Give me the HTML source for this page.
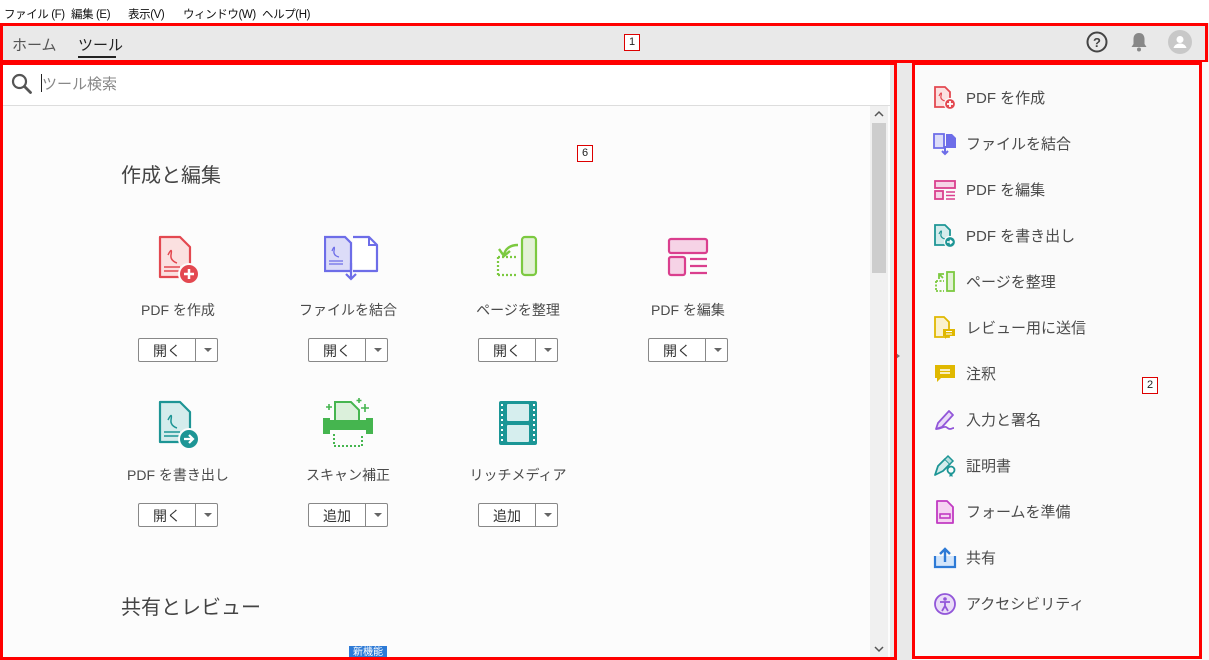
<!DOCTYPE html>
<html><head><meta charset="utf-8"><style>
*{margin:0;padding:0;box-sizing:border-box}
body{width:1209px;height:660px;overflow:hidden;background:#fff;font-family:"Liberation Sans","Noto Sans CJK JP",sans-serif;position:relative;color:#4b4b4b}
.a{position:absolute}
.menu span{position:absolute;top:6px;font-size:11.5px;color:#111;white-space:nowrap;letter-spacing:-0.4px}
.red{position:absolute;border:3px solid #f00}
.lbl{position:absolute;border:1px solid #d00;background:#fff;font-size:11px;color:#222;width:16px;height:17px;text-align:center;line-height:15px}
.tool{position:absolute;width:170px;text-align:center}
.tool .nm{position:absolute;left:0;width:170px;top:65px;font-size:14px;color:#4b4b4b}
.btn{position:absolute;left:45px;top:103px;width:80px;height:24px;border:1px solid #888;border-radius:2px;background:#fff;font-size:14px;color:#333}
.btn .t{position:absolute;left:0;width:56px;top:2px;text-align:center}
.btn .d{position:absolute;left:56px;top:0;width:23px;height:22px;border-left:1px solid #888}
.btn .d:after{content:"";position:absolute;left:8px;top:9px;border:4px solid transparent;border-top:4px solid #666}
.icon{position:absolute;left:61px;top:0}
.side{position:absolute;left:933px;font-size:15px;color:#4b4b4b}
.side svg{position:absolute;left:0;top:-11px}
.side span{position:absolute;left:33px;top:-10px;white-space:nowrap}
</style></head><body>
<div class="menu">
<span style="left:4px">ファイル (F)</span><span style="left:71px">編集 (E)</span><span style="left:128px">表示(V)</span><span style="left:183px">ウィンドウ(W)</span><span style="left:262px">ヘルプ(H)</span>
</div>
<div class="a" style="left:0;top:23px;width:1209px;height:39px;background:#e9e9e9"></div>
<div class="a" style="left:12px;top:34px;font-size:15px;color:#555">ホーム</div>
<div class="a" style="left:78px;top:34px;font-size:15px;color:#222">ツール</div>
<div class="a" style="left:78px;top:56px;width:38px;height:2px;background:#222"></div>
<svg class="a" style="left:1086px;top:31px" width="22" height="22" viewBox="0 0 22 22"><circle cx="11" cy="11" r="9.5" fill="none" stroke="#444" stroke-width="2"/><text x="11" y="16" font-size="13" font-weight="bold" text-anchor="middle" fill="#444" font-family="Liberation Sans">?</text></svg>
<svg class="a" style="left:1129px;top:31px" width="20" height="22" viewBox="0 0 20 22"><path d="M10 2c-4 0-5.5 3-5.5 6v5L2.5 16h15l-2-3V8c0-3-1.5-6-5.5-6z" fill="#888"/><circle cx="10" cy="18.5" r="2" fill="#888"/></svg>
<svg class="a" style="left:1168px;top:30px" width="24" height="24" viewBox="0 0 24 24"><circle cx="12" cy="12" r="12" fill="#c8c8c8"/><circle cx="12" cy="9.5" r="3.5" fill="#fff"/><path d="M5.5 18c1-3.5 4-4.5 6.5-4.5s5.5 1 6.5 4.5z" fill="#fff"/></svg>
<div class="red" style="left:0;top:23px;width:1208px;height:40px"></div>
<div class="lbl" style="left:624px;top:34px">1</div>

<div class="a" style="left:0;top:63px;width:890px;height:597px;background:#fcfcfc"></div>
<div class="a" style="left:0;top:63px;width:890px;height:43px;background:#fff;border-bottom:1px solid #ddd"></div>
<svg class="a" style="left:11px;top:73px" width="22" height="22" viewBox="0 0 22 22"><circle cx="8.5" cy="8.5" r="6.5" fill="none" stroke="#555" stroke-width="2.2"/><path d="M13.5 13.5l6 6" stroke="#555" stroke-width="2.8" stroke-linecap="round"/></svg>
<div class="a" style="left:41px;top:74px;width:1px;height:18px;background:#222"></div>
<div class="a" style="left:42px;top:73px;font-size:15px;color:#888">ツール検索</div>
<div class="a" style="left:870px;top:106px;width:18px;height:552px;background:#f0f0f0"></div>
<div class="a" style="left:872px;top:123px;width:14px;height:150px;background:#cdcdcd"></div>
<svg class="a" style="left:874px;top:110px" width="10" height="8"><path d="M1 6l4-4 4 4" fill="none" stroke="#555" stroke-width="1.5"/></svg>
<svg class="a" style="left:874px;top:645px" width="10" height="8"><path d="M1 2l4 4 4-4" fill="none" stroke="#555" stroke-width="1.5"/></svg>
<div class="a" style="left:890px;top:63px;width:22px;height:597px;background:#e9e9e9"></div>
<div class="a" style="left:896px;top:353px;border:3px solid transparent;border-left:4px solid #777"></div>

<div class="a" style="left:121px;top:159px;font-size:20px;color:#444">作成と編集</div>

<div class="tool" style="left:93px;top:235px">
<svg class="icon" width="50" height="52" viewBox="0 0 50 52"><path d="M6 2h20l10 10v30H6z" fill="#fbe0e0" stroke="#e34850" stroke-width="2.2" stroke-linejoin="round"/><path d="M14 20c3-6 4-6 3 0s6 8 6 8" fill="none" stroke="#e34850" stroke-width="1.5"/><path d="M10 32h16M10 36h16" stroke="#e34850" stroke-width="1.5"/><circle cx="35" cy="39" r="10" fill="#e34850" stroke="#fcfcfc" stroke-width="2"/><path d="M35 34v10M30 39h10" stroke="#fff" stroke-width="2.5"/></svg>
<div class="nm">PDF を作成</div><div class="btn"><span class="t">開く</span><span class="d"></span></div></div>

<div class="tool" style="left:263px;top:235px">
<svg class="icon" width="56" height="52" viewBox="0 0 56 52"><path d="M1 2h20l6 6v28H1z" fill="#dcdcf8" stroke="#6d6de8" stroke-width="2.2"/><path d="M8 16c2-5 3-5 2 0s5 6 5 6" fill="none" stroke="#6d6de8" stroke-width="1.3"/><path d="M5 26h14M5 29h14" stroke="#6d6de8" stroke-width="1.3"/><path d="M29 2h16l8 8v26H29" fill="#fff" stroke="#6d6de8" stroke-width="2.2" stroke-linejoin="round"/><path d="M45 2v8h8" fill="none" stroke="#6d6de8" stroke-width="2"/><path d="M27 28v16M22 39l5 5 5-5" fill="none" stroke="#6d6de8" stroke-width="2.2"/></svg>
<div class="nm">ファイルを結合</div><div class="btn"><span class="t">開く</span><span class="d"></span></div></div>

<div class="tool" style="left:433px;top:235px">
<svg class="icon" width="50" height="48" viewBox="0 0 50 48"><rect x="28" y="2" width="14" height="38" rx="3" fill="#e3f1d6" stroke="#7cc940" stroke-width="2.2"/><path d="M4 22h20M4 40h20M4 22v18" stroke="#7cc940" stroke-width="2.2" stroke-dasharray="2 2"/><path d="M24 10c-8 0-13 4-14 10" fill="none" stroke="#7cc940" stroke-width="2.4"/><path d="M5 14l5 7 6-5" fill="none" stroke="#7cc940" stroke-width="2.4"/></svg>
<div class="nm">ページを整理</div><div class="btn"><span class="t">開く</span><span class="d"></span></div></div>

<div class="tool" style="left:603px;top:235px">
<svg class="icon" width="50" height="48" viewBox="0 0 50 48"><rect x="5" y="4" width="38" height="14" rx="2" fill="#f6d3e6" stroke="#da3f8e" stroke-width="2.2"/><rect x="5" y="22" width="16" height="18" rx="2" fill="#f6d3e6" stroke="#da3f8e" stroke-width="2.2"/><path d="M26 24h17M26 31h17M26 38h17" stroke="#da3f8e" stroke-width="2.2"/></svg>
<div class="nm">PDF を編集</div><div class="btn"><span class="t">開く</span><span class="d"></span></div></div>

<div class="tool" style="left:93px;top:400px">
<svg class="icon" width="50" height="52" viewBox="0 0 50 52"><path d="M6 2h20l10 10v30H6z" fill="#d4ecec" stroke="#1d9595" stroke-width="2.2" stroke-linejoin="round"/><path d="M14 20c3-6 4-6 3 0s6 8 6 8" fill="none" stroke="#1d9595" stroke-width="1.5"/><path d="M10 32h16M10 36h16" stroke="#1d9595" stroke-width="1.5"/><circle cx="35" cy="39" r="10" fill="#1d9595" stroke="#fcfcfc" stroke-width="2"/><path d="M30 39h9M35 35l4 4-4 4" fill="none" stroke="#fff" stroke-width="2.2"/></svg>
<div class="nm">PDF を書き出し</div><div class="btn"><span class="t">開く</span><span class="d"></span></div></div>

<div class="tool" style="left:263px;top:400px">
<svg class="icon" style="left:58px;top:-4px" width="54" height="54" viewBox="0 0 54 54"><path d="M14 6h16l8 8v14H14z" fill="#dbf0db" stroke="#45b54f" stroke-width="2"/><path d="M4 24h46v10H4z" fill="#45b54f"/><path d="M2 22h7v16H2zM45 22h7v16h-7z" fill="#45b54f"/><path d="M13 38v12h28V38" fill="none" stroke="#45b54f" stroke-width="2" stroke-dasharray="2 2"/><path d="M8 8v6M5 11h6M44 8v8M40 12h8M38 2v5M35.5 4.5h5" stroke="#45b54f" stroke-width="1.6"/></svg>
<div class="nm">スキャン補正</div><div class="btn"><span class="t">追加</span><span class="d"></span></div></div>

<div class="tool" style="left:433px;top:400px">
<svg class="icon" style="left:65px" width="40" height="46" viewBox="0 0 40 46"><rect x="1" y="1" width="38" height="44" rx="2" fill="#1b9696"/><rect x="9" y="4" width="22" height="17" rx="1" fill="#d6eeee"/><rect x="9" y="25" width="22" height="17" rx="1" fill="#d6eeee"/><path d="M4 4v38M36 4v38" stroke="#fff" stroke-width="2" stroke-dasharray="2 3"/></svg>
<div class="nm">リッチメディア</div><div class="btn"><span class="t">追加</span><span class="d"></span></div></div>

<div class="a" style="left:121px;top:591px;font-size:20px;color:#444">共有とレビュー</div>
<div class="a" style="left:349px;top:646px;width:38px;height:14px;background:#2d7ad6;color:#fff;font-size:10px;text-align:center;line-height:14px">新機能</div>

<div class="red" style="left:0;top:62px;width:897px;height:598px"></div>
<div class="lbl" style="left:577px;top:145px">6</div>

<div class="a" style="left:912px;top:62px;width:297px;height:598px;background:#fafafa"></div>
<div class="side" style="top:97px"><svg width="24" height="24" viewBox="0 0 24 24"><path d="M2 1h10l5 5v15H2z" fill="#fbe0e0" stroke="#e34850" stroke-width="1.8"/><path d="M6 10c2-4 3-4 2 0s4 5 4 5" fill="none" stroke="#e34850" stroke-width="1.2"/><circle cx="17" cy="18" r="5.5" fill="#e34850" stroke="#fafafa" stroke-width="1.2"/><path d="M17 15v6M14 18h6" stroke="#fff" stroke-width="1.8"/></svg><span>PDF を作成</span></div>
<div class="side" style="top:143px"><svg width="24" height="24" viewBox="0 0 24 24"><path d="M1 2h10v14H1z" fill="#dcdcf8" stroke="#6d6de8" stroke-width="1.8"/><path d="M13 2h6l4 4v10H13z" fill="#6d6de8"/><path d="M12 14v8M9 19l3 3 3-3" fill="none" stroke="#6d6de8" stroke-width="2"/></svg><span>ファイルを結合</span></div>
<div class="side" style="top:189px"><svg width="24" height="24" viewBox="0 0 24 24"><rect x="2" y="3" width="20" height="7" fill="#f6d3e6" stroke="#da3f8e" stroke-width="1.8"/><rect x="2" y="13" width="8" height="8" fill="#f6d3e6" stroke="#da3f8e" stroke-width="1.8"/><path d="M13 14h9M13 17.5h9M13 21h9" stroke="#da3f8e" stroke-width="1.5"/></svg><span>PDF を編集</span></div>
<div class="side" style="top:235px"><svg width="24" height="24" viewBox="0 0 24 24"><path d="M2 1h10l5 5v15H2z" fill="#d4ecec" stroke="#1d9595" stroke-width="1.8"/><path d="M6 10c2-4 3-4 2 0s4 5 4 5" fill="none" stroke="#1d9595" stroke-width="1.2"/><circle cx="17" cy="18" r="5.5" fill="#1d9595" stroke="#fafafa" stroke-width="1.2"/><path d="M14 18h5M17 16l2 2-2 2" fill="none" stroke="#fff" stroke-width="1.5"/></svg><span>PDF を書き出し</span></div>
<div class="side" style="top:281px"><svg width="24" height="24" viewBox="0 0 24 24"><rect x="14" y="2" width="7" height="19" fill="#e3f1d6" stroke="#7cc940" stroke-width="1.8"/><path d="M3 11h8M3 21h8M3 11v10" stroke="#7cc940" stroke-width="1.8" stroke-dasharray="2 1.5"/><path d="M11 4H6v5M6 4l4 4" fill="none" stroke="#7cc940" stroke-width="1.8"/></svg><span>ページを整理</span></div>
<div class="side" style="top:327px"><svg width="24" height="24" viewBox="0 0 24 24"><path d="M2 1h9l5 5v15H2z" fill="#fbf1cc" stroke="#e0b800" stroke-width="1.8"/><path d="M10 13h12v7h-7l-3 3v-3h-2z" fill="#e0b800"/><path d="M13 15.5h6M13 18h6" stroke="#fff" stroke-width="1"/></svg><span>レビュー用に送信</span></div>
<div class="side" style="top:373px"><svg width="24" height="24" viewBox="0 0 24 24"><path d="M2 3h20v13H8l-4 4v-4H2z" fill="#e0b800"/><path d="M7 8h10M7 11h10" stroke="#fff" stroke-width="1.6"/></svg><span>注釈</span></div>
<div class="side" style="top:419px"><svg width="24" height="24" viewBox="0 0 24 24"><path d="M3 21l2-6L16 3l4 4L9 19z" fill="#eadcf8" stroke="#9256d9" stroke-width="1.8" stroke-linejoin="round"/><path d="M3 21c5 0 8-3 10-2s2 2 4 2 2-1 4-1" fill="none" stroke="#9256d9" stroke-width="1.8"/></svg><span>入力と署名</span></div>
<div class="side" style="top:465px"><svg width="24" height="24" viewBox="0 0 24 24"><path d="M2 21l3-9 7-7 5 5-7 7z" fill="#d4ecec" stroke="#1d9595" stroke-width="1.8" stroke-linejoin="round"/><path d="M12 5l3-3 5 5-3 3" fill="#b7dede" stroke="#1d9595" stroke-width="1.5"/><circle cx="18" cy="16" r="3.5" fill="none" stroke="#1d9595" stroke-width="1.8"/><path d="M16.5 19v4l1.5-1 1.5 1v-4" fill="#1d9595"/></svg><span>証明書</span></div>
<div class="side" style="top:511px"><svg width="24" height="24" viewBox="0 0 24 24"><path d="M4 1h10l6 6v16H4z" fill="#f6d3f2" stroke="#c13ac2" stroke-width="1.8" stroke-linejoin="round"/><rect x="7" y="14" width="10" height="4" fill="none" stroke="#c13ac2" stroke-width="1.6"/></svg><span>フォームを準備</span></div>
<div class="side" style="top:557px"><svg width="24" height="24" viewBox="0 0 24 24"><path d="M2 10v11h20V10" fill="#d3e5fa" stroke="#2d7ad6" stroke-width="2.2"/><path d="M12 16V3M7 8l5-5 5 5" fill="none" stroke="#2d7ad6" stroke-width="2.4"/></svg><span>共有</span></div>
<div class="side" style="top:603px"><svg width="24" height="24" viewBox="0 0 24 24"><circle cx="12" cy="12" r="10" fill="#eadcf8" stroke="#9256d9" stroke-width="1.8"/><circle cx="12" cy="7" r="1.8" fill="#9256d9"/><path d="M7 10h10M12 10v4l-3 5M12 14l3 5" fill="none" stroke="#9256d9" stroke-width="1.8"/></svg><span>アクセシビリティ</span></div>
<div class="red" style="left:912px;top:62px;width:290px;height:597px"></div>
<div class="lbl" style="left:1142px;top:377px">2</div>
</body></html>
